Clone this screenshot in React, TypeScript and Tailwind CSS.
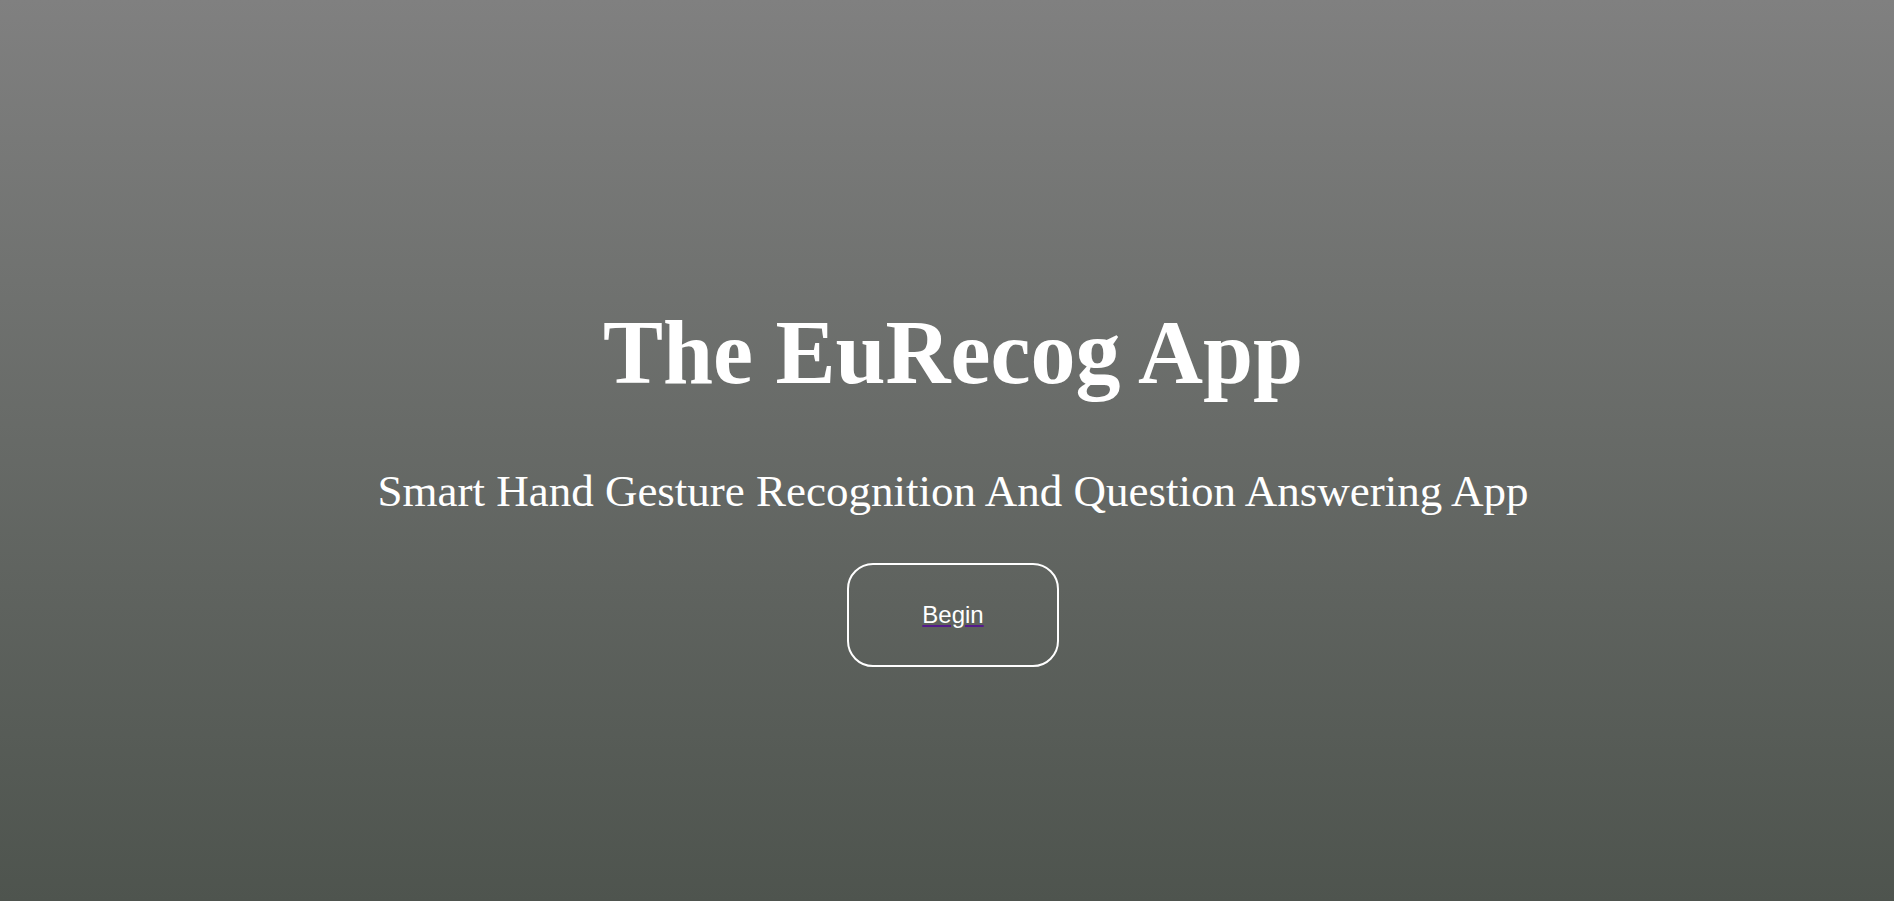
export default function App() {
  return (
    // full page with grey gradient
    <div className="min-h-screen w-full bg-gradient-to-b from-[#808080] to-[#4e544e] flex flex-col items-center pl-3 pt-[308px]">
      {/* main heading */}
      <h1 className="text-white font-bold text-[90px] leading-none font-['Liberation_Serif',serif]">
        The EuRecog App
      </h1>

      {/* sub heading */}
      <p className="mt-[71px] text-white text-[45px] leading-none font-['Liberation_Serif',serif]">
        Smart Hand Gesture Recognition And Question Answering App
      </p>

      {/* begin button */}
      <a
        href="#"
        className="mt-[49px] w-[212px] h-[104px] flex items-center justify-center border-2 border-white rounded-[26px] text-[#551a8b] underline font-['Liberation_Sans',sans-serif] text-[24px]"
      >
        <span className="text-white">Begin</span>
      </a>
    </div>
  )
}
